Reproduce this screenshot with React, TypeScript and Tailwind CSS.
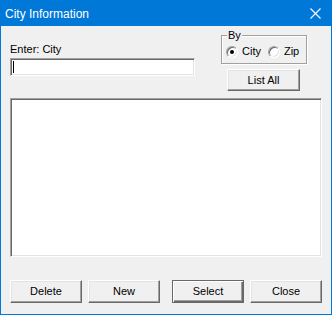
import React from "react";

const btnBase =
  "w-[72px] h-[23px] bg-[#f0f0f0] text-[11px] text-black flex items-center justify-center border border-t-white border-l-white border-r-[#696969] border-b-[#696969] shadow-[inset_-1px_-1px_0_#a0a0a0,inset_1px_1px_0_#e3e3e3]";

function Radio({ checked, label }: { checked?: boolean; label: string }) {
  return (
    <div className="flex items-center">
      <span className="w-[12px] h-[12px] rounded-full bg-white border border-t-[#a0a0a0] border-l-[#a0a0a0] border-r-white border-b-white shadow-[inset_1px_1px_0_#696969,inset_-1px_-1px_0_#e3e3e3] flex items-center justify-center">
        {checked && <span className="w-[4px] h-[4px] rounded-full bg-black" />}
      </span>
      <span className="ml-[4px] text-[11px] leading-[13px]">{label}</span>
    </div>
  );
}

export default function App() {
  return (
    <div
      className="w-[332px] h-[315px] bg-[#f0f0f0] flex flex-col border-x border-b border-[#0078d7] text-black"
      style={{ fontFamily: '"Liberation Sans", Arial, sans-serif' }}
    >
      <div className="h-[26px] -mx-[1px] bg-[#0078d7] flex items-center justify-between pl-[5px] pr-[11px] shrink-0">
        <span className="text-white text-[12px] leading-[14px] pt-[1px]">City Information</span>
        <svg width="11" height="11" viewBox="0 0 11 11" className="mt-[1px]">
          <path d="M0.5 0.5 L10.5 10.5 M10.5 0.5 L0.5 10.5" stroke="white" strokeWidth="1.1" />
        </svg>
      </div>
      <div className="flex flex-col pl-[9px]">
        <div className="flex">
          <div className="w-[185px] flex flex-col pt-[17px]">
            <span className="text-[11px] leading-[13px]">Enter: City</span>
            <div className="mt-[2px] h-[18px] bg-white border border-t-[#a0a0a0] border-l-[#a0a0a0] border-r-white border-b-white shadow-[inset_1px_1px_0_#696969,inset_-1px_-1px_0_#e3e3e3] flex items-center pl-[2px]">
              <span className="w-[1px] h-[12px] bg-black" />
            </div>
          </div>
          <div className="ml-[26px] flex flex-col pt-[3px]">
            <fieldset className="w-[86px] h-[35px] border border-[#a0a0a0] shadow-[inset_1px_1px_0_#ffffff,1px_1px_0_#ffffff] p-0 m-0">
              <legend className="ml-[5px] px-[1px] text-[11px] leading-[13px] bg-[#f0f0f0]">By</legend>
              <div className="flex items-center pl-[4px] mt-[3px] gap-[7px]">
                <Radio checked label="City" />
                <Radio label="Zip" />
              </div>
            </fieldset>
            <button className={btnBase + " ml-[6px] mt-[5px] !w-[73px] !h-[22px]"}>List All</button>
          </div>
        </div>
        <div className="mt-[7px] w-[312px] h-[159px] bg-white border border-t-[#a0a0a0] border-l-[#a0a0a0] border-r-white border-b-white shadow-[inset_1px_1px_0_#696969,inset_-1px_-1px_0_#e3e3e3]" />
        <div className="mt-[23px] flex">
          <button className={btnBase}>Delete</button>
          <button className={btnBase + " ml-[6px]"}>New</button>
          <button className="ml-[12px] w-[72px] h-[23px] bg-[#f0f0f0] text-[11px] text-black flex items-center justify-center border border-[#696969] shadow-[inset_1px_1px_0_#ffffff,inset_-1px_-1px_0_#696969,inset_-2px_-2px_0_#a0a0a0]">
            Select
          </button>
          <button className={btnBase + " ml-[6px]"}>Close</button>
        </div>
      </div>
    </div>
  );
}
